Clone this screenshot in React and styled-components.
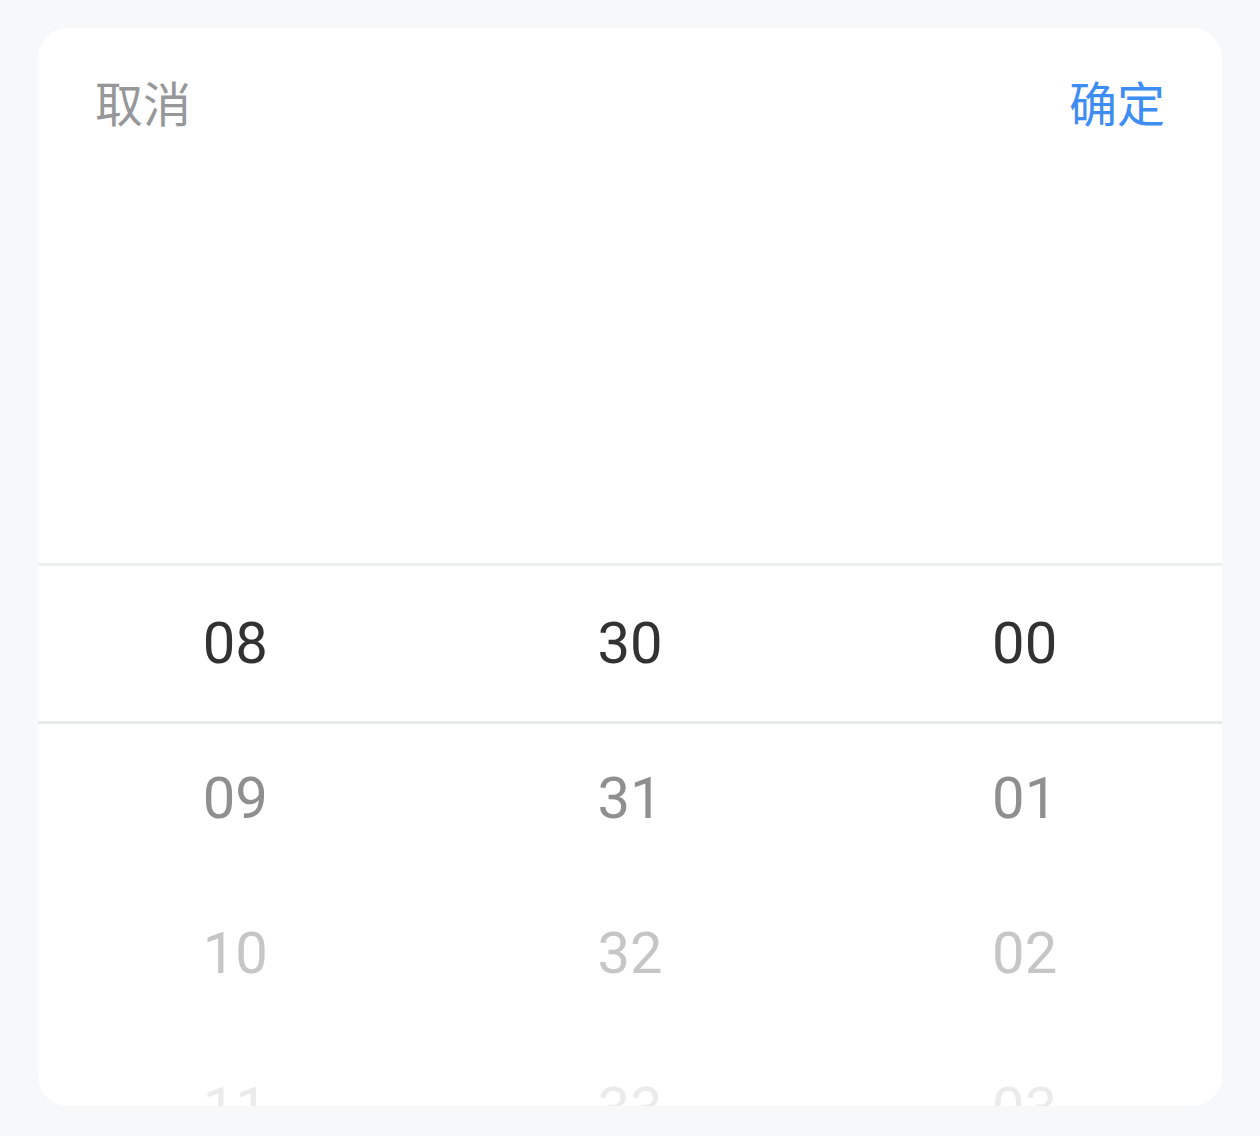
import React from "react";
import styled, { createGlobalStyle } from "styled-components";

const GlobalStyle = createGlobalStyle`
  html, body {
    margin: 0;
    padding: 0;
    background: #f7f8fa;
  }
  * { box-sizing: border-box; }
`;

const Page = styled.div`
  padding: 28px 38px 30px;
  background: #f7f8fa;
  font-family: Roboto, "Noto Sans", "Noto Sans CJK SC", sans-serif;
`;

const Card = styled.div`
  background: #ffffff;
  border-radius: 30px;
  overflow: hidden;
  height: 1078px;
  display: flex;
  flex-direction: column;
`;

const Header = styled.div`
  height: 151px;
  flex: none;
  display: flex;
  align-items: center;
  justify-content: space-between;
  padding: 0 57px 6px 57px;
`;

const HeaderButton = styled.button`
  border: 0;
  background: none;
  padding: 0;
  margin: 0;
  font-family: "Noto Sans CJK SC", "Noto Sans", sans-serif;
  font-size: 48px;
  line-height: 1;
  color: ${(p) => (p.$primary ? "#3e8df4" : "#969799")};
  cursor: pointer;
`;

const Picker = styled.div`
  position: relative;
  flex: 1;
  display: flex;
  overflow: hidden;
`;

const Column = styled.div`
  flex: 1;
  display: flex;
  flex-direction: column;
  padding-top: 386px;
`;

const Item = styled.div`
  height: 155px;
  flex: none;
  display: flex;
  align-items: center;
  justify-content: center;
  font-family: Roboto, "Noto Sans", sans-serif;
  font-size: 58px;
  color: ${(p) => p.$color};
`;

const Frame = styled.div`
  position: absolute;
  left: 0;
  right: 0;
  top: 384px;
  height: 161px;
  border-top: 3px solid #eeeff1;
  border-bottom: 3px solid #e9eaec;
  pointer-events: none;
`;

const shades = ["#323233", "#8f8f90", "#c6c6c7", "#ebebec", "#f6f6f6"];

const columns = [
  ["08", "09", "10", "11", "12"],
  ["30", "31", "32", "33", "34"],
  ["00", "01", "02", "03", "04"],
];

export default function App() {
  return (
    <>
      <GlobalStyle />
      <Page>
        <Card>
          <Header>
            <HeaderButton>取消</HeaderButton>
            <HeaderButton $primary>确定</HeaderButton>
          </Header>
          <Picker>
            {columns.map((col, ci) => (
              <Column key={ci}>
                {col.map((v, i) => (
                  <Item key={v} $color={shades[i]}>
                    {v}
                  </Item>
                ))}
              </Column>
            ))}
            <Frame />
          </Picker>
        </Card>
      </Page>
    </>
  );
}
